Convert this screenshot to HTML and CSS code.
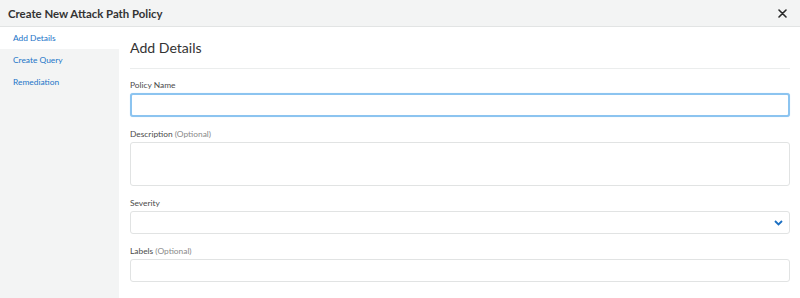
FILE: index.html
```html
<!DOCTYPE html>
<html lang="en">
<head>
  <meta charset="UTF-8" />
  <title>Create New Attack Path Policy</title>
  <link rel="stylesheet" href="styles.css">
</head>
<body>
  <div class="modal">
    <div class="modal-header">
      <h2>Create New Attack Path Policy</h2>
      <button class="close-btn" aria-label="Close">
        <svg width="9" height="9" viewBox="0 0 9 9">
          <path d="M1 1 L8 8 M8 1 L1 8" stroke="#2a2a2a" stroke-width="1.6" stroke-linecap="round"/>
        </svg>
      </button>
    </div>

    <div class="modal-body">
      <ul class="steps">
        <li class="active">Add Details</li>
        <li>Create Query</li>
        <li>Remediation</li>
      </ul>

      <div class="content">
        <h3>Add Details</h3>

        <div class="field">
          <label>Policy Name</label>
          <input type="text" class="input focused">
        </div>

        <div class="field">
          <label>Description <span class="optional">(Optional)</span></label>
          <textarea class="input textarea"></textarea>
        </div>

        <div class="field">
          <label>Severity</label>
          <div class="input select">
            <svg width="9" height="6" viewBox="0 0 9 6">
              <path d="M1 1 L4.5 4.5 L8 1" fill="none" stroke="#1b6fc2" stroke-width="1.8"/>
            </svg>
          </div>
        </div>

        <div class="field">
          <label>Labels <span class="optional">(Optional)</span></label>
          <input type="text" class="input">
        </div>
      </div>
    </div>
  </div>
</body>
</html>
```

FILE: styles.css
```css
* {
  margin: 0;
  padding: 0;
  box-sizing: border-box;
  font-family: 'Lato', 'Liberation Sans', sans-serif;
}
body {
  background: #fff;
  color: #333;
  overflow: hidden;
}
.modal {
  width: 800px;
  height: 298px;
  display: flex;
  flex-direction: column;
}
.modal-header {
  flex-shrink: 0;
  height: 27px;
  background: #f3f4f4;
  border-bottom: 1px solid #e2e4e4;
  display: flex;
  align-items: center;
  justify-content: space-between;
  padding: 0 13px 0 8px;
}
.modal-header h2 {
  font-size: 11.4px;
  font-weight: 700;
  color: #333;
}
.close-btn {
  background: none;
  border: none;
  display: flex;
  cursor: pointer;
}
.modal-body {
  flex: 1;
  display: flex;
  min-height: 0;
}
.steps {
  flex-shrink: 0;
  width: 119px;
  background: #f3f4f4;
  list-style: none;
}
.steps li {
  height: 22px;
  line-height: 22px;
  padding-left: 13px;
  font-size: 8.4px;
  color: #1b74c8;
}
.steps li.active {
  background: #fff;
}
.content {
  flex: 1;
  padding: 11px 10px 0 11px;
}
.content h3 {
  font-size: 14.1px;
  font-weight: 400;
  color: #333;
  line-height: 20px;
  padding-bottom: 10px;
  border-bottom: 1px solid #ebeded;
  margin-bottom: 10px;
}
.field {
  margin-bottom: 11px;
}
.field label {
  display: block;
  font-size: 8.4px;
  color: #4a4a4a;
  line-height: 12px;
  margin-bottom: 2px;
}
.optional {
  color: #8a8a8a;
}
.input {
  display: block;
  width: 100%;
  height: 23px;
  border: 1px solid #e1e3e3;
  border-radius: 3px;
  background: #fff;
  outline: none;
}
.input.focused {
  height: 24px;
  border: 2px solid #8cc4f0;
  box-shadow: 0 0 1px #b9dcf7;
}
.textarea {
  height: 44px;
  resize: none;
}
.select {
  display: flex;
  align-items: center;
  justify-content: flex-end;
  padding-right: 6px;
}
```
